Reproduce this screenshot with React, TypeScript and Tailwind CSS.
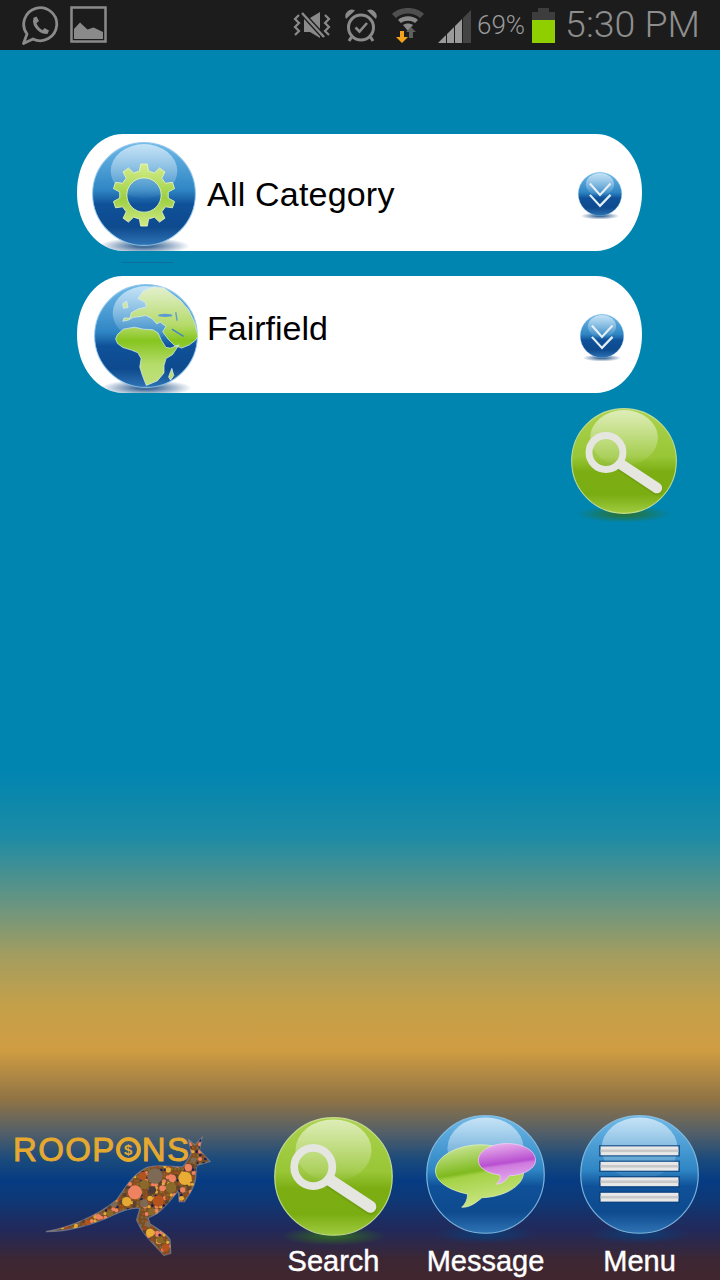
import React from "react";

type OrbKind = "blue" | "green";

const palette = {
  blue: { rim: "#8cc4ea", top: "#6fb9e8", mid: "#2f86c4", band: "#0f5199", low: "#0e4a8e", bottom: "#2f74b4", shadow: "#0a3f7a" },
  green: { rim: "#d3e89a", top: "#acd24e", mid: "#98c636", band: "#7cae14", low: "#7aad12", bottom: "#a0cb40", shadow: "#2f6f20" },
};

function Orb({ id, kind, size, children }: { id: string; kind: OrbKind; size: number; children?: React.ReactNode }) {
  const c = palette[kind];
  return (
    <svg width={size} height={size * 1.12} viewBox="0 0 100 112" className="block shrink-0 overflow-visible">
      <defs>
        <linearGradient id={`${id}-b`} x1="0" y1="0" x2="0" y2="1">
          <stop offset="0" stopColor={c.top} />
          <stop offset="0.46" stopColor={c.mid} />
          <stop offset="0.6" stopColor={c.band} />
          <stop offset="0.82" stopColor={c.low} />
          <stop offset="1" stopColor={c.bottom} />
        </linearGradient>
        <linearGradient id={`${id}-h`} x1="0" y1="0" x2="0" y2="1">
          <stop offset="0" stopColor="#fff" stopOpacity="0.6" />
          <stop offset="1" stopColor="#fff" stopOpacity="0.03" />
        </linearGradient>
        <radialGradient id={`${id}-s`}>
          <stop offset="0.2" stopColor={c.shadow} stopOpacity="0.75" />
          <stop offset="1" stopColor={c.shadow} stopOpacity="0" />
        </radialGradient>
      </defs>
      <ellipse cx="50" cy="100" rx="44" ry="8" fill={`url(#${id}-s)`} />
      <circle cx="50" cy="50" r="49.4" fill={`url(#${id}-b)`} stroke={c.rim} strokeWidth="1" strokeOpacity="0.85" />
      <ellipse cx="50" cy="28" rx="32" ry="26" fill={`url(#${id}-h)`} />
      {children}
    </svg>
  );
}

function gearPath(cx: number, cy: number, ro: number, ri: number, hole: number, teeth: number) {
  let d = "";
  const step = (Math.PI * 2) / teeth;
  for (let i = 0; i < teeth; i++) {
    const a = i * step - Math.PI / 2;
    const pts: [number, number][] = [
      [ri, a - step * 0.3],
      [ro, a - step * 0.17],
      [ro, a + step * 0.17],
      [ri, a + step * 0.3],
    ];
    for (const [r, t] of pts) {
      d += `${d ? "L" : "M"}${(cx + r * Math.cos(t)).toFixed(2)} ${(cy + r * Math.sin(t)).toFixed(2)}`;
    }
  }
  d += `ZM${cx + hole} ${cy}A${hole} ${hole} 0 1 0 ${cx - hole} ${cy}A${hole} ${hole} 0 1 0 ${cx + hole} ${cy}Z`;
  return d;
}

function Gear() {
  return (
    <g>
      <defs>
        <linearGradient id="gear-g" x1="0" y1="0" x2="0" y2="1">
          <stop offset="0" stopColor="#d6ee8e" />
          <stop offset="0.55" stopColor="#9ccf42" />
          <stop offset="1" stopColor="#cfe985" />
        </linearGradient>
      </defs>
      <path d={gearPath(50, 51, 30, 23.5, 16.5, 10)} fill="url(#gear-g)" fillRule="evenodd" stroke="#eaf7c2" strokeWidth="0.8" strokeLinejoin="round" />
    </g>
  );
}

function Continents() {
  return (
    <g transform="scale(0.3145) translate(-12,-12)">
      <defs>
        <linearGradient id="land-g" gradientUnits="userSpaceOnUse" x1="0" y1="20" x2="0" y2="320">
          <stop offset="0" stopColor="#e3f0cf" />
          <stop offset="0.4" stopColor="#b4da68" />
          <stop offset="0.55" stopColor="#86c51e" />
          <stop offset="0.8" stopColor="#b6dc6c" />
          <stop offset="1" stopColor="#bfe27a" />
        </linearGradient>
      </defs>
      <path
        fill="url(#land-g)"
        stroke="#d9edf6"
        strokeWidth="2.2"
        strokeLinejoin="round"
        d="M100 126L104 116L122 116L126 100L148 88L172 82L168 68L146 56L164 32L196 20L226 24L276 62L302 92L320 130L330 172L322 184L304 198L280 208L258 200L238 180L222 158L232 142L214 128L204 134L190 118L170 108L150 112L132 114L118 122Z
           M78 180L84 166L102 150L136 144L162 150L192 152L208 162L218 184L232 206L246 208L272 198L252 228L232 240L226 262L226 284L206 308L172 322L160 292L152 266L156 240L146 222L126 214L100 206L84 194Z
           M240 296L250 270L256 292L246 306Z M100 72L112 64L116 84L102 86Z"
      />
      <ellipse cx="230" cy="108" rx="22" ry="5" fill="#5b9bcf" />
      <path d="M262 98L266 124" stroke="#5b9bcf" strokeWidth="4" />
      <path d="M250 150L286 172" stroke="#3f86c2" strokeWidth="4" />
    </g>
  );
}

function Magnifier() {
  return (
    <g>
      <path d="M47 54L81 76.500" stroke="#5f8a10" strokeOpacity="0.35" strokeWidth="11.500" strokeLinecap="round" />
      <path d="M47 53L81 75.500" stroke="#e6e6e1" strokeWidth="10" strokeLinecap="round" />
      <circle cx="33" cy="42" r="16" fill="#ffffff" fillOpacity="0.08" stroke="#e6e6e1" strokeWidth="6.500" />
    </g>
  );
}

function Chat() {
  return (
    <g>
      <defs>
        <linearGradient id="chat-g" x1="0" y1="0" x2="0.25" y2="1">
          <stop offset="0" stopColor="#d6ecaa" />
          <stop offset="0.5" stopColor="#7fba1e" />
          <stop offset="0.56" stopColor="#a4d246" />
          <stop offset="1" stopColor="#c8e480" />
        </linearGradient>
        <linearGradient id="chat-p" x1="0" y1="0" x2="0.2" y2="1">
          <stop offset="0" stopColor="#f0bdf0" />
          <stop offset="0.55" stopColor="#b84fd0" />
          <stop offset="0.62" stopColor="#cf7ade" />
          <stop offset="1" stopColor="#e2aaee" />
        </linearGradient>
      </defs>
      <path d="M46 25C66 25 82 35 82 48C82 60 65 69 47 69.500C42 74 36 78 30 77.500C33 75 35 71 35 66.500C19 63 8 56 8 47C8 35 26 25 46 25Z" fill="url(#chat-g)" stroke="#e5f3bf" strokeWidth="0.6" />
      <path d="M68 24C82 24 92 30 92 38C92 46 80 51 70 51C68 54 64 58.500 59 58C62 56 63 53 62 50.500C52 49 44 45 44 38C44 30 55 24 68 24Z" fill="url(#chat-p)" stroke="#f2d4f5" strokeWidth="0.6" />
    </g>
  );
}

function MenuBars() {
  return (
    <g>
      {[26, 39, 52, 65].map((y) => (
        <g key={y}>
          <rect x="16" y={y - 0.7} width="68" height="9.6" fill="#0b3f78" opacity="0.75" />
          <rect x="17.3" y={y + 0.4} width="65.4" height="7.4" fill="#e8e8e8" />
          <rect x="17.3" y={y + 3} width="65.4" height="2.2" fill="#c8c8c8" />
        </g>
      ))}
    </g>
  );
}

function Chevrons() {
  return (
    <g fill="none" stroke="#e4eef5" strokeWidth="5" strokeLinejoin="miter">
      <path d="M27 26L50 52L74 26" />
      <path d="M27 52L50 77L74 52" />
    </g>
  );
}

function StatusIcons() {
  const c = "#8a8a8a";
  return (
    <>
      <svg width="40" height="40" viewBox="0 0 40 40" className="ml-[20px] shrink-0">
        <path d="M3.500 38.500L7 29A16.500 16.500 0 1 1 13 34Z" fill="none" stroke={c} strokeWidth="2.800" strokeLinejoin="round" />
        <path d="M14.500 14.500C14 21 20 27.500 27 27.500" fill="none" stroke={c} strokeWidth="3" />
        <path d="M13 13L16.500 11.500L19 16L16 18.500ZM22 26L24.500 23L29 25.500L27.500 29Z" fill={c} />
      </svg>
      <svg width="38" height="38" viewBox="0 0 38 38" className="ml-[10px] shrink-0">
        <rect x="1.500" y="1.500" width="34" height="34" fill="none" stroke={c} strokeWidth="2.500" />
        <path d="M4 33V23L10 16.500L17.500 23.500L23.500 21.500L33 26V33Z" fill={c} />
      </svg>
      <svg width="38" height="30" viewBox="0 0 38 30" className="ml-[185px] shrink-0">
        <path d="M11 8H17L27 2V28L17 22H11Z" fill={c} />
        <path d="M9 3L31 27" stroke="#1c1c1c" strokeWidth="5" />
        <path d="M9 3L31 27" stroke={c} strokeWidth="2.500" />
        <path d="M6 5L2 9L6 13L2 17L6 21L2 25M32 5L36 9L32 13L36 17L32 21L36 25" fill="none" stroke={c} strokeWidth="2.200" />
      </svg>
      <svg width="36" height="36" viewBox="0 0 36 36" className="ml-[12px] shrink-0">
        <circle cx="18" cy="20.500" r="12.500" fill="none" stroke={c} strokeWidth="3" />
        <path d="M3 12A6.500 6.500 0 0 1 12 3.500Z M33 12A6.500 6.500 0 0 0 24 3.500Z" fill={c} />
        <path d="M12.500 20.500L16.500 24.500L24 16" fill="none" stroke={c} strokeWidth="2.600" />
        <path d="M8.500 30L6 34M27.500 30L30 34" stroke={c} strokeWidth="3" />
      </svg>
      <svg width="34" height="38" viewBox="0 0 34 38" className="ml-[12px] shrink-0">
        <path d="M1 8C9 0 25 0 33 8L29 12C23 6 11 6 5 12Z" fill="#4f4f4f" />
        <path d="M7 14C12 9 22 9 27 14L24 17C20 14 14 14 10 17Z" fill={c} />
        <path d="M12 19C15 17 19 17 22 19L17 25Z" fill={c} />
        <path d="M18 32V26H15L20 21L25 26H22V32Z" fill="#5f5f5f" />
        <path d="M9 25H13V31H17L11 37L5 31H9Z" fill="#f5a11d" />
      </svg>
      <svg width="33" height="33" viewBox="0 0 33 33" className="ml-[13px] mt-[2px] shrink-0">
        <path d="M0 33L8 25V33Z M9 24L16 17V33H9Z M17 16L24 9V33H17Z" fill="#9a9a9a" />
        <path d="M25 8L33 0V33H25Z" fill="#444444" />
      </svg>
    </>
  );
}

const tones = ["#b5521f", "#8a6a2a", "#e4aa35", "#ef8260", "#7d6a55", "#1b1d55", "#a0491c", "#5a4230"];

const fillDots: [number, number, number, string][] = [];
for (let y = 110; y < 470; y += 11) {
  for (let x = 140; x < 635; x += 11) {
    const h = (x * 7 + y * 13 + ((x * y) % 17) * 5) % 97;
    fillDots.push([x + (h % 7) - 3, y + (h % 5) - 2, 3 + (h % 4), tones[h % tones.length]]);
  }
}

const spots: [number, number, number, string][] = [
  [465, 228, 23, "#7d6a55"], [405, 277, 21, "#ef8260"], [555, 235, 20, "#e9ad36"], [513, 263, 16, "#8a6a2a"],
  [475, 303, 17, "#b5521f"], [380, 305, 14, "#e4aa35"], [433, 253, 14, "#8a6a2a"], [428, 228, 12, "#b5521f"],
  [457, 270, 11, "#4a3a3a"], [432, 310, 12, "#7d6a55"], [565, 203, 11, "#ef8260"], [517, 235, 11, "#ef8260"],
  [487, 265, 9, "#ef8260"], [450, 398, 12, "#e9ad36"], [497, 443, 11, "#b5521f"], [445, 372, 10, "#7d6a55"],
  [480, 420, 10, "#8a6a2a"], [330, 340, 10, "#8a6a2a"], [342, 312, 10, "#7d6a55"], [295, 350, 8, "#ef8260"],
  [262, 368, 8, "#b5521f"], [228, 377, 6, "#e4aa35"], [450, 295, 8, "#e4aa35"], [455, 335, 10, "#8a6a2a"],
  [548, 270, 8, "#ef8260"], [545, 295, 7, "#e4aa35"], [580, 180, 8, "#7d6a55"], [505, 210, 8, "#e4aa35"],
];

function Kangaroo() {
  const body =
    "M138 395C200 385 290 350 350 300C372 270 395 225 440 203C480 190 530 205 548 200C560 190 568 170 574 160L566 120L585 135L606 113L598 150L630 184L590 196L586 240C580 270 565 285 553 305L538 305L535 272C520 290 505 310 483 330C470 345 450 348 444 355L450 372C470 385 505 405 510 420L512 460L492 466C470 440 435 410 420 380L410 360L420 325C395 320 370 330 340 345C280 375 200 395 138 395Z";
  return (
    <svg width="260" height="180" viewBox="0 0 780 540" className="block">
      <defs>
        <clipPath id="roo">
          <path d={body} />
        </clipPath>
        <filter id="soft">
          <feGaussianBlur stdDeviation="1.200" />
        </filter>
      </defs>
      <g filter="url(#soft)">
        <path d={body} fill="#7a4f24" stroke="#6e7488" strokeWidth="4" />
        <g clipPath="url(#roo)">
          {fillDots.map(([x, y, r, f], i) => (
            <circle key={i} cx={x} cy={y} r={r} fill={f} />
          ))}
          {spots.map(([x, y, r, f], i) => (
            <circle key={i} cx={x} cy={y} r={r} fill={f} />
          ))}
        </g>
      </g>
    </svg>
  );
}

function Pill({ orb, label, textClass, arrowClass, arrowId, marginClass }: { orb: React.ReactNode; label: string; textClass: string; arrowClass: string; arrowId: string; marginClass: string }) {
  return (
    <div className={`ml-[77px] flex h-[117px] w-[565px] shrink-0 items-start overflow-hidden rounded-[46px/58px] bg-white ${marginClass}`}>
      {orb}
      <span className={`font-['Liberation_Sans',Arial,sans-serif] text-[34px] leading-none text-black ${textClass}`}>{label}</span>
      <div className={`ml-auto ${arrowClass}`}>
        <Orb id={arrowId} kind="blue" size={44}>
          <Chevrons />
        </Orb>
      </div>
    </div>
  );
}

function NavItem({ id, kind, label, offset, labelClass, children }: { id: string; kind: OrbKind; label: string; offset: string; labelClass: string; children: React.ReactNode }) {
  return (
    <div className={`flex w-[119px] flex-col items-center ${offset}`}>
      <Orb id={id} kind={kind} size={119}>
        {children}
      </Orb>
      <span className={`whitespace-nowrap font-['Liberation_Sans',Arial,sans-serif] text-[29px] leading-[30px] text-white [-webkit-text-stroke:0.4px_white] ${labelClass}`}>{label}</span>
    </div>
  );
}

export default function App() {
  return (
    <div className="flex h-[1280px] w-[720px] flex-col overflow-hidden font-['Liberation_Sans',Arial,sans-serif]">
      <header className="flex h-[50px] shrink-0 items-center bg-[#1c1c1c]">
        <StatusIcons />
        <span className="ml-[6px] font-['Roboto',sans-serif] text-[26px] font-light text-[#9a9a9a]">69%</span>
        <div className="ml-[7px] flex h-[35px] w-[23px] shrink-0 flex-col items-center">
          <div className="h-[4px] w-[11px] bg-[#3d3d3d]" />
          <div className="h-[8px] w-full bg-[#3d3d3d]" />
          <div className="w-full flex-1 bg-[#8fcf00]" />
        </div>
        <span className="ml-[10px] font-['Roboto',sans-serif] text-[37.5px] font-light leading-none whitespace-nowrap text-[#8e8e8e]">5:30 PM</span>
      </header>

      <main className="flex flex-1 flex-col bg-[linear-gradient(180deg,#0085b0_0px,#0085b0_720px,#1c8ba6_785px,#6a9580_855px,#a39d60_905px,#c4a04a_955px,#d09d42_1000px,#8f7345_1050px,#586166_1080px,#1a4a7c_1110px,#063c83_1130px,#0e3876_1150px,#22295a_1180px,#3c2733_1210px,#40262e_1230px)]">
        <Pill
          marginClass="mt-[84px]"
          textClass="ml-[11px] mt-[43px] tracking-[0.2px]"
          arrowClass="mt-[38px] mr-[20px]"
          arrowId="a1"
          label="All Category"
          orb={
            <div className="ml-[15px] mt-[8px]">
              <Orb id="gear" kind="blue" size={104}>
                <Gear />
              </Orb>
            </div>
          }
        />
        <div className="ml-[121px] mt-[11px] h-px w-[52px] shrink-0 bg-[#0a6f9c]" />
        <Pill
          marginClass="mt-[13px]"
          textClass="ml-[9px] mt-[35px]"
          arrowClass="mt-[38px] mr-[18px]"
          arrowId="a2"
          label="Fairfield"
          orb={
            <div className="ml-[17px] mt-[8px]">
              <Orb id="globe" kind="blue" size={104}>
                <Continents />
              </Orb>
            </div>
          }
        />
        <div className="mt-[15px] ml-[571px]">
          <Orb id="find" kind="green" size={106}>
            <Magnifier />
          </Orb>
        </div>

        <footer className="mt-auto flex h-[180px] items-start">
          <div className="relative h-[180px] w-[260px] shrink-0">
            <Kangaroo />
            <div className="absolute left-[13px] top-[33px] flex items-center text-[33px] leading-none tracking-[1.4px] text-[#e6a92f] [-webkit-text-stroke:0.9px_#e6a92f]">
              <span>ROOP</span>
              <span className="flex h-[25px] w-[25px] items-center justify-center rounded-full border-[4px] border-[#e6a92f] text-[15px] font-bold tracking-normal [-webkit-text-stroke:0]">$</span>
              <span className="ml-[1px]">NS</span>
            </div>
          </div>
          <NavItem id="nav1" kind="green" label="Search" offset="ml-[14px] mt-[17px]" labelClass="mt-[-4px]">
            <Magnifier />
          </NavItem>
          <NavItem id="nav2" kind="blue" label="Message" offset="ml-[33px] mt-[15px]" labelClass="mt-[-2px]">
            <Chat />
          </NavItem>
          <NavItem id="nav3" kind="blue" label="Menu" offset="ml-[35px] mt-[15px]" labelClass="mt-[-2px]">
            <MenuBars />
          </NavItem>
        </footer>
      </main>
    </div>
  );
}
